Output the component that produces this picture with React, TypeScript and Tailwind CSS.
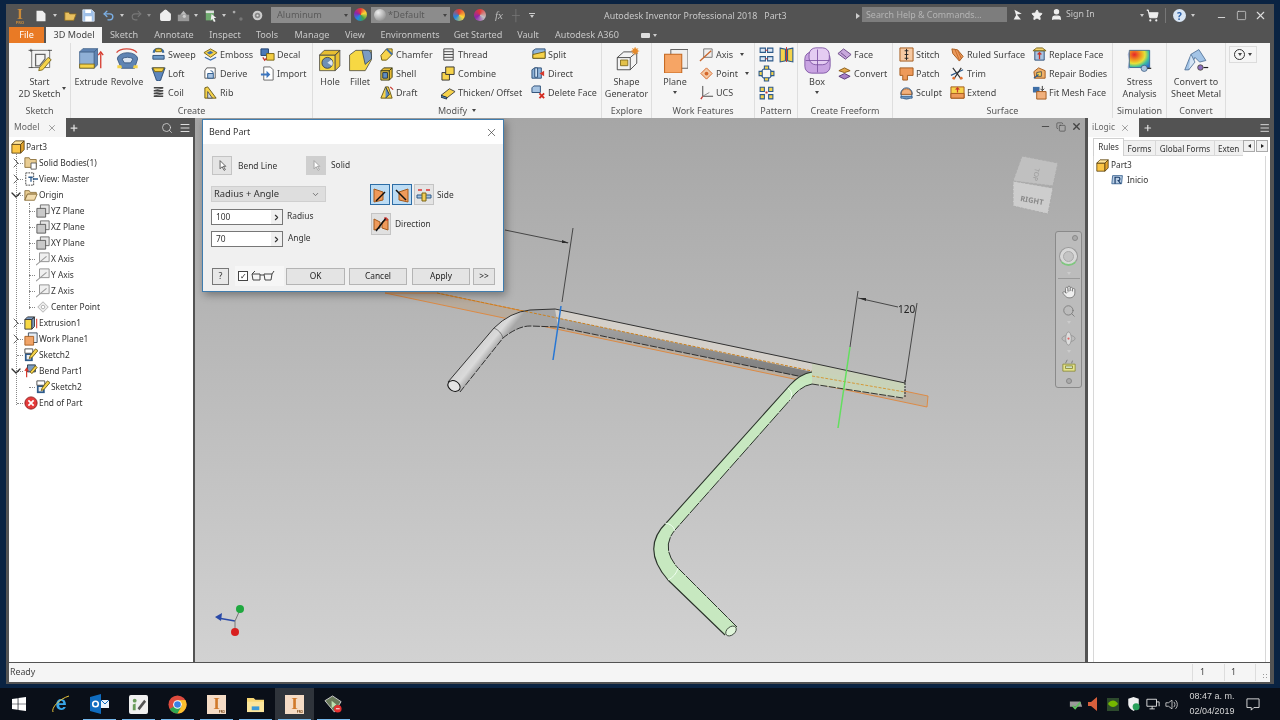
import React from "react";
import { House, Undo2, Redo2, Star, User, ShoppingCart, Minus, Square, X, Search, Menu, Plus, ChevronRight, ChevronDown, Copy } from "lucide-react";

type P = { children?: React.ReactNode; s?: number; v?: number };
const S = ({ children, s = 15, v = 16 }: P) => (
  <svg width={s} height={s} viewBox={`0 0 ${v} ${v}`} className="block shrink-0">{children}</svg>
);

const Cube = ({ s = 15, f = "#fbc544", t = "#ffe59a", r = "#e5a52c", l = "#5a4212" }: { s?: number; f?: string; t?: string; r?: string; l?: string }) => (
  <S s={s}>
    <path d="M1 5h10v10H1z" fill={f} stroke={l} />
    <path d="M1 5l4-4h10l-4 4z" fill={t} stroke={l} />
    <path d="M11 5l4-4v10l-4 4z" fill={r} stroke={l} />
  </S>
);

const Dn = () => <span className="inline-block w-0 h-0 border-x-[2.5px] border-x-transparent border-t-[3px] border-t-[#444]" />;
const DnW = () => <span className="inline-block w-0 h-0 border-x-[2.5px] border-x-transparent border-t-[3px] border-t-[#ccc]" />;

/* ---------- small ribbon icons ---------- */
const ic: Record<string, React.ReactNode> = {
  sweep: <S><path d="M3 6a5 4 0 0 1 10 0" fill="none" stroke="#3b6ea5" strokeWidth="2.5" /><path d="M2 9h12v4H2z" fill="#6f9bc9" stroke="#2d4f78" /><path d="M5 2h6v3H5z" fill="#f6d34a" stroke="#7a6414" /></S>,
  loft: <S><path d="M1 2h14L11 13a3 3 0 0 1-6 0z" fill="#5d86bd" stroke="#2d4f78" /><path d="M2 2h12l-2 4H4z" fill="#f5d347" stroke="#7a6414" /></S>,
  coil: <S><g fill="none" stroke="#444" strokeWidth="1.6"><path d="M3 3h10M3 6h10M3 9h10M3 12h10" /><path d="M13 3L3 6M13 6L3 9M13 9L3 12" strokeWidth=".8" /></g></S>,
  emboss: <S><path d="M1 6l7-4 7 4-7 5z" fill="#f6d34a" stroke="#7a6414" /><path d="M4 6l4-2 3 2-4 2z" fill="#3f6fb0" /><path d="M2 11l6 3 6-3" fill="none" stroke="#3f6fb0" strokeWidth="1.3" /></S>,
  derive: <S><path d="M4 2h9v11H2V5z" fill="#fff" stroke="#555" /><path d="M5 8h6v5H5z" fill="#a9c4e2" stroke="#2d5a8a" /><path d="M8 5a3 3 0 0 1 3 3" fill="none" stroke="#2d5a8a" /></S>,
  rib: <S><path d="M2 14V3l3-1 9 12z" fill="#f6d34a" stroke="#6a5a14" /><path d="M5 14V7l5 7z" fill="#cfd9e6" stroke="#555" /></S>,
  decal: <S><path d="M1 2h8v7H1z" fill="#4b79b8" stroke="#1f3f6c" /><path d="M7 7h8v7H7z" fill="#f4cd42" stroke="#7a6414" /><path d="M3 11l2 3 2-2" fill="none" stroke="#c8362d" strokeWidth="1.4" /></S>,
  imp: <S><path d="M4 1h7l3 3v11H4z" fill="#fff" stroke="#666" /><path d="M1 8h6V5l4 4-4 4v-3H1z" fill="#3d77c0" /></S>,
  chamfer: <S><path d="M2 9l6-7h6v6l-6 6H3z" fill="#f7d34b" stroke="#6a5a14" /><path d="M8 2l6 6" stroke="#3e6ea6" strokeWidth="2" /></S>,
  shell: <S><path d="M2 5h9v10H2z" fill="#f7d34b" stroke="#3c3c14" /><path d="M2 5l3-3h9l-3 3zM11 5l3-3v10l-3 3z" fill="#e7bb36" stroke="#3c3c14" /><path d="M4 7h5v6H4z" fill="#5f8ec2" stroke="#234" /></S>,
  draft: <S><path d="M2 14L7 2h3l4 12z" fill="#f7d34b" stroke="#6a5a14" /><path d="M7 2l4 8-4 4" fill="#5f8ec2" stroke="#234" /><path d="M12 2l3 3" stroke="#c8362d" strokeWidth="1.3" /></S>,
  thread: <S><path d="M3 2h10v12H3z" fill="#f3f3f3" stroke="#444" /><path d="M3 5h10M3 8h10M3 11h10" stroke="#444" /></S>,
  combine: <S><path d="M1 7h8v8H1z" fill="#f7d34b" stroke="#333" /><path d="M5 1h9v8H5z" fill="#f7d34b" stroke="#333" /></S>,
  thicken: <S><path d="M0 11l9-7 6 3-9 7z" fill="#f7d34b" stroke="#444" /><path d="M0 11v2l6 2v-2z" fill="#5f8ec2" stroke="#234" /></S>,
  split: <S><path d="M2 4l3-2h10v10H2z" fill="#8fb4da" stroke="#2d4f78" /><path d="M2 8l13-3v7H2z" fill="#f7d34b" stroke="#7a6414" /></S>,
  direct: <S><path d="M1 4l3-2h7v11H1z" fill="#8fb4da" stroke="#2d4f78" /><path d="M4 2h3v10H4z" fill="#cfe0f1" stroke="#2d4f78" /><path d="M9 8l5-3v6z" fill="#d73a2d" /></S>,
  delface: <S><path d="M1 3l2-2h7v7H1z" fill="#a7c4e2" stroke="#2d4f78" /><path d="M9 9l5 5M14 9l-5 5" stroke="#d42a1f" strokeWidth="2" /></S>,
  axis: <S><path d="M5 2h9v9H5z" fill="#eee" stroke="#777" /><path d="M1 15L13 4" stroke="#c8662d" strokeWidth="1.4" /></S>,
  point: <S><path d="M8 2l6 6-6 6-6-6z" fill="#f4c9a4" stroke="#d4662a" /><circle cx="8" cy="8" r="2" fill="#d4662a" /></S>,
  ucs: <S><path d="M4 1v11h11" fill="none" stroke="#444" /><path d="M4 12l-2 3" stroke="#c8362d" strokeWidth="1.4" /><path d="M4 12l7-4" stroke="#888" /></S>,
  face: <S><path d="M1 7l6-5 8 6-6 5z" fill="#c8a8dc" stroke="#6b4a88" /><path d="M4 6l6 5" stroke="#6b4a88" /></S>,
  convert: <S><path d="M2 5l6-3 6 3-6 2z" fill="#e3a94a" stroke="#8a5a14" /><path d="M2 11l6-3 6 3-6 3z" fill="#a880c8" stroke="#5a3a78" /></S>,
  stitch: <S><path d="M1 1h14v14H1z" fill="#f6c9a2" stroke="#a35a1c" /><path d="M8 2v12M6 4h4M6 8h4M6 12h4" stroke="#222" /></S>,
  patch: <S><path d="M1 2h14v8H9v5H4v-5H1z" fill="#ee9a5a" stroke="#a35a1c" /></S>,
  sculpt: <S><path d="M2 10a6 6 0 0 1 12 0z" fill="#f1b07c" stroke="#a35a1c" /><circle cx="8" cy="9" r="6" fill="none" stroke="#2d5a8a" /><path d="M2 12h12v2H2z" fill="#8fb4da" stroke="#2d5a8a" /></S>,
  ruled: <S><path d="M2 2l6 1 6 7-4 5-7-8z" fill="#ea9a5c" stroke="#a35a1c" /><path d="M5 2l5 12M8 3l4 9" stroke="#c76a2a" /></S>,
  trim: <S><path d="M1 10l13-6" stroke="#2d5a8a" strokeWidth="1.4" /><path d="M3 2l9 12M12 2L4 14" stroke="#333" strokeWidth="1.2" /><circle cx="4" cy="13" r="1.5" fill="#e07030" /><circle cx="12" cy="13" r="1.5" fill="#e07030" /></S>,
  extend: <S><path d="M1 2h14v12H1z" fill="#f7d34b" stroke="#a35a1c" /><path d="M1 9h14v5H1z" fill="#ee9a5a" stroke="#a35a1c" /><path d="M8 8V3M6 5l2-2 2 2" stroke="#c8362d" strokeWidth="1.3" fill="none" /></S>,
  replace: <S><path d="M3 4h10v10H3z" fill="#a7c4e2" stroke="#2d4f78" /><path d="M1 4l4-3h6l4 3z" fill="#f3d26c" stroke="#7a6414" /><path d="M8 13V6M6 8l2-2 2 2" stroke="#c8362d" strokeWidth="1.4" fill="none" /></S>,
  repair: <S><path d="M2 6l5-4 7 3v8H3z" fill="#f0b06a" stroke="#a35a1c" /><path d="M5 7l5-1v5H5z" fill="#f7d34b" stroke="#555" /><path d="M2 13l5-4" stroke="#2d5a8a" strokeWidth="1.3" /></S>,
  fitmesh: <S><path d="M1 2h7v6H1z" fill="#3e6ea6" /><path d="M5 7h10v8H5z" fill="#f1b07c" stroke="#a35a1c" /><path d="M11 1v5M9 4l2 2 2-2" stroke="#333" fill="none" /></S>,
  pat1: <S s={17}><path d="M2 2h5v4H2zM9 2h5v4H9zM2 10h5v4H2zM9 10h5v4H9z" fill="#dbe7f5" stroke="#2d5a8a" /><path d="M7 4h2M7 12h2" stroke="#c8362d" /></S>,
  pat2: <S s={17}><path d="M2 2l5 1v11l-5 1zM14 2l-5 1v11l5 1z" fill="#f4d34b" stroke="#2d5a8a" /><path d="M8 1v14" stroke="#c8362d" /></S>,
  pat3: <S s={17}><circle cx="8" cy="8" r="5" fill="none" stroke="#2d5a8a" /><path d="M6 1h4v3H6zM6 12h4v3H6zM1 6h3v4H1zM12 6h3v4h-3z" fill="#f4d34b" stroke="#2d5a8a" /></S>,
  pat4: <S s={17}><path d="M2 3h4v4H2zM10 3h4v4h-4zM2 10h4v4H2zM10 10h4v4h-4z" fill="#f4d34b" stroke="#2d5a8a" /><path d="M7 8h2M8 7v2" stroke="#c8362d" strokeWidth="1.5" /></S>,
};

/* ---------- large ribbon icons ---------- */
const L: Record<string, React.ReactNode> = {
  sketch: <S s={25} v={32}><path d="M6 3h23v22H6z" fill="#f4f4f4" stroke="#555" /><path d="M11 8h12v6l-7 9h-5z" fill="none" stroke="#666" strokeWidth="1.6" /><path d="M16 25L27 12l4 3-11 13-5 1z" fill="#f6d34a" stroke="#6a5a14" /><path d="M2 3h5M5 1v4M27 3h5M2 25h5" stroke="#333" /></S>,
  extrude: <S s={26} v={32}><path d="M2 6h18v20H2z" fill="#8fb0d6" stroke="#45668e" /><path d="M2 6l4-4h18l-4 4zM20 6l4-4v20l-4 4z" fill="#5f84b3" stroke="#45668e" /><path d="M2 21h18v5H2z" fill="#f4d34b" stroke="#7a6414" /><path d="M28 26V8M25 10l3-4 3 4" stroke="#d6392d" strokeWidth="1.6" fill="none" /></S>,
  revolve: <S s={25} v={32}><path d="M2 6a14 8 0 0 1 26 0" fill="none" stroke="#d6493d" strokeWidth="1.6" /><path d="M3 14a13 8 0 0 1 26 0l-4 12H8z" fill="#5f84b3" stroke="#2f4f78" /><path d="M9 14a8 4 0 0 1 14 0l-3 5H12z" fill="#dbe5f1" stroke="#2f4f78" /><path d="M3 22h5l1 4H3zM29 22h-5l-1 4h6z" fill="#f4d34b" /></S>,
  hole: <S s={25} v={32}><path d="M2 9h20v20H2z" fill="#f7d843" stroke="#444" /><path d="M2 9l6-6h20l-6 6zM22 9l6-6v20l-6 6z" fill="#e8bf31" stroke="#444" /><circle cx="12" cy="19" r="7" fill="#6f8fb5" stroke="#333" /><path d="M12 19l5-4a7 7 0 0 1 1 8z" fill="#dbe5f1" /></S>,
  fillet: <S s={25} v={32}><path d="M2 29V9L10 3h20v12l-8 14z" fill="#f7d843" stroke="#444" /><path d="M18 3h8a6 6 0 0 1 4 6v5l-8 7z" fill="#7b9bc2" stroke="#345" /></S>,
  shape: <S s={26} v={32}><path d="M4 13l8-7h16v14l-8 8H4z" fill="#f3f3f3" stroke="#333" /><path d="M4 13h16v15M20 13l8-7" fill="none" stroke="#333" /><path d="M8 16h9v7H8z" fill="#e3c14a" stroke="#7a6414" /><circle cx="26" cy="5" r="3.4" fill="#e58a2a" /><path d="M26 0v10M21 5h10M22.5 1.5l7 7M29.500 1.500l-7 7" stroke="#e58a2a" /></S>,
  plane: <S s={25} v={32}><path d="M10 2h22v24H10z" fill="#eee" stroke="#666" strokeWidth="1.3" /><path d="M2 8h22v24H2z" fill="#f6a565" stroke="#c4661d" strokeWidth="1.3" /></S>,
  box: <S s={27} v={32}><rect x="1" y="6" width="30" height="25" rx="8" fill="#c9a4e2" stroke="#7a4fa0" /><rect x="6" y="1" width="24" height="20" rx="8" fill="#e4ccf2" stroke="#7a4fa0" /><path d="M16 3v27M2 16h28" stroke="#7a4fa0" /></S>,
  stress: <S s={25} v={32}><defs><radialGradient id="st" cx=".25" cy=".25" r=".95"><stop offset="0" stopColor="#e8252a" /><stop offset=".35" stopColor="#f0a020" /><stop offset=".55" stopColor="#e4e23a" /><stop offset=".75" stopColor="#40c0a0" /><stop offset="1" stopColor="#2c6ed4" /></radialGradient></defs><path d="M3 3h26v22H3z" fill="url(#st)" stroke="#2a5a8a" /><path d="M1 8L3 3l-2 22 2 3" fill="#9ac" /><circle cx="22" cy="26" r="4" fill="#aac4df" stroke="#3a5a80" /><path d="M26 26h5" stroke="#222" strokeWidth="1.5" /></S>,
  sheet: <S s={25} v={32}><path d="M1 28L9 8l10-6 9 14-8 2-6-6-8 16z" fill="#a3c4e6" stroke="#44668e" /><path d="M9 8l5 10-8 10" fill="#d4e4f4" stroke="#44668e" /><circle cx="21" cy="25" r="3.500" fill="#8b6fc0" stroke="#443" /><path d="M25 25h6" stroke="#222" strokeWidth="1.5" /></S>,
};

const Small = ({ i, t, dn }: { i: string; t: string; dn?: boolean }) => (
  <div className="h-[19px] flex items-center gap-[2px] whitespace-nowrap">
    <span className="w-[15px] flex justify-center">{ic[i]}</span>
    <span>{t}</span>
    {dn && <span className="ml-[5px] flex"><Dn /></span>}
  </div>
);
const Col = ({ items, className }: { items: [string, string, boolean?][]; className: string }) => (
  <div className={`flex flex-col shrink-0 ${className}`}>
    {items.map((x) => <Small key={x[1]} i={x[0]} t={x[1]} dn={x[2]} />)}
  </div>
);
const Big = ({ i, l, className, dn, corner }: { i: string; l: string[]; className: string; dn?: boolean; corner?: boolean }) => (
  <div className={`relative flex flex-col items-center shrink-0 ${className}`}>
    <div className="h-[30px] flex items-center">{L[i]}</div>
    <div className="mt-px text-center leading-[12px] whitespace-nowrap">{l.map((x) => <div key={x}>{x}</div>)}</div>
    {dn && <div className="mt-[3px] flex"><Dn /></div>}
    {corner && <span className="absolute left-[53px] top-[42px] flex"><Dn /></span>}
  </div>
);
const Group = ({ label, className, children, dn }: { label: string; className: string; children: React.ReactNode; dn?: boolean }) => (
  <div className={`h-full flex flex-col border-r border-[#dedede] shrink-0 ${className}`}>
    <div className="flex pt-[2px] h-[60px]">{children}</div>
    <div className="h-[15px] flex items-center justify-center gap-[5px] text-[#555]">{label}{dn && <Dn />}</div>
  </div>
);

const tabs: [string, string][] = [
  ["Sketch", "w-[44px]"], ["Annotate", "w-[56px]"], ["Inspect", "w-[46px]"], ["Tools", "w-[38px]"], ["Manage", "w-[52px]"],
  ["View", "w-[34px]"], ["Environments", "w-[76px]"], ["Get Started", "w-[60px]"], ["Vault", "w-[40px]"], ["Autodesk A360", "w-[78px]"],
];

/* ---------- tree ---------- */
const T: Record<string, React.ReactNode> = {
  part: <Cube s={14} />,
  folder: <S s={14}><path d="M1 3h5l1 2h8v9H1z" fill="#e9cd93" stroke="#8a6f3a" /></S>,
  solids: <S s={14}><path d="M1 2h5l1 2h7v9H1z" fill="#e9cd93" stroke="#8a6f3a" /><path d="M8 8h6v7H8z" fill="#fff" stroke="#555" /></S>,
  view: <S s={14}><path d="M2 1h9v14H2z" fill="#fff" stroke="#333" strokeDasharray="2 1" /><path d="M5 6h5M8 6v5M10 8h6" stroke="#2d5a8a" strokeWidth="1.5" /></S>,
  open: <S s={14}><path d="M1 3h5l1 2h7v2H4l-3 7z" fill="#e9cd93" stroke="#8a6f3a" /><path d="M1 14l3-7h11l-3 7z" fill="#f2dcae" stroke="#8a6f3a" /></S>,
  plane: <S s={14}><path d="M5 1h10v10H5z" fill="#e6e6e6" stroke="#666" /><path d="M1 5h10v10H1z" fill="#c9c9c9" stroke="#555" /></S>,
  axis: <S s={14}><path d="M4 1h11v10H4z" fill="#f0f0f0" stroke="#888" /><path d="M0 15L12 5" stroke="#999" strokeWidth="1.2" /></S>,
  point: <S s={14}><path d="M8 2l6 6-6 6-6-6z" fill="#eee" stroke="#aaa" /><circle cx="8" cy="8" r="2" fill="#fff" stroke="#aaa" /></S>,
  extr: <S s={14}><path d="M1 4h8v11H1z" fill="#f7d843" stroke="#333" /><path d="M1 4l3-3h8l-3 3zM9 4l3-3v11l-3 3z" fill="#7b9bc2" stroke="#333" /><path d="M14.500 14V3" stroke="#d6392d" strokeWidth="1.2" /></S>,
  wp: <S s={14}><path d="M5 1h10v11H5z" fill="#e4ecf5" stroke="#345" /><path d="M1 5h10v10H1z" fill="#f0a468" stroke="#a35a1c" /></S>,
  sketch: <S s={14}><path d="M1 6h9v9H1z" fill="#2d5a8a" /><path d="M3 8h5v5H3z" fill="#eee" /><path d="M1 1h9v5H1z" fill="#fff" stroke="#444" /><path d="M7 9l6-8 3 2-7 8-3 1z" fill="#f6d34a" stroke="#6a5a14" /></S>,
  bend: <S s={14}><path d="M4 1h9v8H4z" fill="#7b9bc2" stroke="#234" /><path d="M7 9l6-7 2 2-6 7z" fill="#f6d34a" stroke="#6a5a14" /><path d="M3 15V6M1 8l2-3 2 3" stroke="#d6392d" strokeWidth="1.4" fill="none" /></S>,
  end: <S s={14}><circle cx="8" cy="8" r="7" fill="#e43a3a" stroke="#8a1a1a" /><path d="M5 5l6 6M11 5l-6 6" stroke="#fff" strokeWidth="2" /></S>,
};
type Row = { l: number; i: string; t: string; c?: "r" | "d" };
const rows: Row[] = [
  { l: 0, i: "part", t: "Part3" },
  { l: 1, i: "solids", t: "Solid Bodies(1)", c: "r" },
  { l: 1, i: "view", t: "View: Master", c: "r" },
  { l: 1, i: "open", t: "Origin", c: "d" },
  { l: 2, i: "plane", t: "YZ Plane" },
  { l: 2, i: "plane", t: "XZ Plane" },
  { l: 2, i: "plane", t: "XY Plane" },
  { l: 2, i: "axis", t: "X Axis" },
  { l: 2, i: "axis", t: "Y Axis" },
  { l: 2, i: "axis", t: "Z Axis" },
  { l: 2, i: "point", t: "Center Point" },
  { l: 1, i: "extr", t: "Extrusion1", c: "r" },
  { l: 1, i: "wp", t: "Work Plane1", c: "r" },
  { l: 1, i: "sketch", t: "Sketch2" },
  { l: 1, i: "bend", t: "Bend Part1", c: "d" },
  { l: 2, i: "sketch", t: "Sketch2" },
  { l: 1, i: "end", t: "End of Part" },
];

const TreeRow = ({ r, idx }: { r: Row; idx: number }) => (
  <div className={`relative h-4 flex items-center gap-px whitespace-nowrap ${r.l === 0 ? "ml-[2px]" : r.l === 1 ? "ml-[15px]" : "ml-[27px]"}`}>
    {idx > 0 && <span className="absolute left-[-7px] top-[8px] w-[6px] border-t border-dotted border-[#888]" />}
    {r.c && (
      <span className="absolute left-[-16px] top-0 text-[#666]">
        {r.c === "r" ? <ChevronRight size={16} strokeWidth={1.5} /> : <ChevronDown size={16} strokeWidth={2} className="text-[#333]" />}
      </span>
    )}
    {T[r.i]}
    <span className="text-[#333]">{r.t}</span>
  </div>
);

/* ---------- dialog ---------- */
const Btn = ({ t, className }: { t: string; className: string }) => (
  <div className={`h-[17px] bg-[#e4e4e4] border border-[#b4b4b4] flex items-center justify-center text-[#222] shrink-0 ${className}`}>{t}</div>
);
const Arrow = ({ c = "#444" }: { c?: string }) => (
  <S s={13}><path d="M5 2v10l2.500-2.500L10 14l1.500-1-2.500-4H12z" fill="#fff" stroke={c} /></S>
);
const sideIcon = (k: number) => (
  <S s={16}>
    {k === 0 && <><path d="M2 2l9 3v8l-9 2z" fill="#ef9a5a" stroke="#a35a1c" /><path d="M4 14l9-9" stroke="#111" strokeWidth="1.500" /></>}
    {k === 1 && <><path d="M14 2L5 5v8l9 2z" fill="#ef9a5a" stroke="#a35a1c" /><path d="M2 3l10 10" stroke="#111" strokeWidth="1.500" /></>}
    {k === 2 && <><path d="M2 3h4M10 3h4" stroke="#d33" strokeWidth="1.300" /><path d="M1 8h14v3H1z" fill="#a7c4e2" stroke="#2d5a8a" /><path d="M6 6h4v8H6z" fill="#f2ce5a" stroke="#7a6414" /></>}
    {k === 3 && <><path d="M1 3l6 3v6l-6 2zM15 3L9 6v6l6 2z" fill="#ef9a5a" stroke="#a35a1c" /><path d="M3 15L13 2" stroke="#111" strokeWidth="1.500" /><path d="M11 2h3v3" stroke="#d22" fill="none" /></>}
  </S>
);

const Dialog = () => (
  <div className="absolute left-[7px] top-px w-[302px] h-[173px] border border-[#3f7cae] bg-[#f0f0f0] shadow-[2px_3px_8px_rgba(0,0,0,0.35)] flex flex-col text-[8.400px] text-[#333]">
    <div className="h-[24px] bg-white flex items-center justify-between pl-[6px] pr-[5px] text-[8.900px] shrink-0">
      <span>Bend Part</span>
      <X size={13} strokeWidth={1.2} className="text-[#333]" />
    </div>
    <div className="pl-[9px] pt-[12px] flex items-center">
      <div className="w-[20px] h-[19px] bg-[#e4e4e4] border border-[#c4c4c4] flex items-center justify-center"><Arrow /></div>
      <span className="ml-[6px] w-[68px] mt-[2px]">Bend Line</span>
      <div className="w-[20px] h-[19px] bg-[#cfcfcf] flex items-center justify-center"><Arrow c="#999" /></div>
      <span className="ml-[5px]">Solid</span>
    </div>
    <div className="flex mt-[9px]">
      <div className="pl-[8px] w-[167px] pt-[2px] shrink-0">
        <div className="w-[115px] h-[16px] bg-[#dedede] border border-[#cfcfcf] flex items-center justify-between pl-[2px] pr-[5px] text-[9.400px]">
          <span className="text-[#333]">Radius + Angle</span><ChevronDown size={9} className="text-[#555]" />
        </div>
        <div className="flex items-center mt-[7px]">
          <div className="w-[72px] h-[16px] border border-[#777] bg-white flex items-center justify-between pl-[4px]"><span>100</span><span className="h-full w-[11px] bg-[#f0f0f0] flex items-center justify-center"><ChevronRight size={9} strokeWidth={3} /></span></div>
          <span className="ml-[4px] -mt-[1px]">Radius</span>
        </div>
        <div className="flex items-center mt-[6px]">
          <div className="w-[72px] h-[16px] border border-[#777] bg-white flex items-center justify-between pl-[4px]"><span>70</span><span className="h-full w-[11px] bg-[#f0f0f0] flex items-center justify-center"><ChevronRight size={9} strokeWidth={3} /></span></div>
          <span className="ml-[5px] -mt-[2px]">Angle</span>
        </div>
      </div>
      <div>
        <div className="flex items-center gap-[2px]">
          <div className="w-[20px] h-[21px] bg-[#bcdcf4] border border-[#2d6da6] flex items-center justify-center">{sideIcon(0)}</div>
          <div className="w-[20px] h-[21px] bg-[#bcdcf4] border border-[#2d6da6] flex items-center justify-center">{sideIcon(1)}</div>
          <div className="w-[20px] h-[21px] bg-[#e4e4e4] border border-[#c4c4c4] flex items-center justify-center">{sideIcon(2)}</div>
          <span className="ml-px mt-px">Side</span>
        </div>
        <div className="flex items-center mt-[8px] ml-px">
          <div className="w-[20px] h-[22px] bg-[#e0e0e0] border border-[#c4c4c4] flex items-center justify-center">{sideIcon(3)}</div>
          <span className="ml-[4px]">Direction</span>
        </div>
      </div>
    </div>
    <div className="flex items-center mt-[19px] pl-[9px]">
      <div className="w-[17px] h-[17px] bg-[#e8e8e8] border border-[#777] flex items-center justify-center text-[9px] text-[#333]">?</div>
      <div className="ml-[6px] w-[49px] h-[20px] bg-[#f6f6f6] flex items-center pl-[3px] gap-[3px]">
        <span className="w-[10px] h-[10px] bg-white border border-[#444] flex items-center justify-center text-[8px] leading-none text-[#222]">✓</span>
        <svg width="24" height="12" viewBox="0 0 24 12" className="block"><path d="M1 4h8v6H2zM13 4h8l-1 6h-6zM9 5h4M21 4l2-3M1 4l3-3" fill="none" stroke="#444" /></svg>
      </div>
      <Btn t="OK" className="ml-[2px] w-[59px]" />
      <Btn t="Cancel" className="ml-[4px] w-[58px]" />
      <Btn t="Apply" className="ml-[5px] w-[58px]" />
      <Btn t=">>" className="ml-[3px] w-[22px]" />
    </div>
  </div>
);

/* ---------- 3D scene (a drawing) ---------- */
const Scene = () => (
  <svg className="absolute inset-0" width="890" height="544" viewBox="195 118 890 544">
    <defs>
      <linearGradient id="band" x1="0" y1="0" x2="0" y2="1"><stop offset="0" stopColor="#a8a8a8" /><stop offset="1" stopColor="#6e6e6e" /></linearGradient>
      <linearGradient id="tube" gradientUnits="userSpaceOnUse" x1="470" y1="350" x2="485" y2="362"><stop offset="0" stopColor="#cfcfcf" /><stop offset=".6" stopColor="#dadada" /><stop offset="1" stopColor="#a6a6a6" /></linearGradient>
    </defs>
    <path d="M385 293L437 293 928 396 927 407z" fill="#b9996f" fillOpacity=".35" stroke="#e0863a" strokeWidth=".9" />
    <path d="M448 382L494 328Q510 312 530 310L555 309 905 383 903 398 558 327 530 326Q518 326 503 338L460 392z" fill="url(#tube)" />
    <path d="M555 309L905 383 903 398 558 327z" fill="#d4d0ca" />
    <path d="M558 318L860 382 880 393 558 327z" fill="url(#band)" />
    <path d="M437 293L812 371" stroke="#c9801f" strokeWidth="1" strokeDasharray="3 1.500" fill="none" />
    <path d="M448 382L494 328Q510 312 530 310L555 309 812 363" fill="none" stroke="#222" strokeWidth=".9" />
    <path d="M460 392L503 338Q518 326 530 326L558 327 808 378" fill="none" stroke="#222" strokeWidth=".9" strokeDasharray="7 1.500" />
    <path d="M494 328Q501 331 503 338" fill="none" stroke="#555" strokeWidth=".7" />
    <ellipse cx="454" cy="386" rx="6.500" ry="5" transform="rotate(30 454 386)" fill="#e4e4e4" stroke="#111" strokeWidth="1" />
    {/* green part */}
    <path d="M812 372Q800 374 790 385L667 522Q640 548 668 580L725 635 737 627 678 568Q660 548 675 530L790 400Q800 386 812 384L903 398 905 383z" fill="#c7e9c0" fillOpacity=".96" />
    <path d="M812 363L905 383 903 398 812 384z" fill="#c8d0b8" fillOpacity=".9" />
    <path d="M812 376L905 392" stroke="#d49a3a" strokeWidth="1" strokeDasharray="3 1.500" />
    <path d="M812 363L905 383" fill="none" stroke="#222" strokeWidth=".9" />
    <path d="M812 384L903 398" fill="none" stroke="#222" strokeWidth=".9" strokeDasharray="7 1.500" />
    <path d="M812 372Q800 374 790 385L667 522Q640 548 668 580L725 635" fill="none" stroke="#2a332a" strokeWidth="1.100" />
    <path d="M812 384Q800 386 790 400L675 530Q660 548 678 568L737 627" fill="none" stroke="#2a332a" strokeWidth="1" strokeDasharray="14 1" />
    <path d="M788 388Q794 392 790 400M665 523Q673 524 675 531M668 580Q676 576 678 568" fill="none" stroke="#f0fff0" strokeWidth="1" />
    <ellipse cx="731" cy="631" rx="6" ry="4" transform="rotate(-40 731 631)" fill="#dff5da" stroke="#2a332a" strokeWidth=".8" />
    <path d="M905 380V398" stroke="#222" strokeDasharray="2 1" />
    {/* dimensions */}
    <path d="M505 230L568 243M573 228L562 302M858 291L850 347M858 298L898 307M917 303L905 383" stroke="#2b2b2b" strokeWidth=".8" fill="none" />
    <path d="M569 243l-7-3v3zM859 298l7 3v-3z" fill="#2b2b2b" />
    <path d="M561 306L553 360" stroke="#2676d4" strokeWidth="1.500" />
    <path d="M850 347L838 428" stroke="#62e05e" strokeWidth="1.500" />
    <text x="898" y="313" fontSize="10" fill="#222" fontFamily="'Noto Sans',sans-serif">120</text>
    {/* triad */}
    <path d="M235 621L218 618" stroke="#2a4aa8" strokeWidth="1.500" />
    <path d="M215 617l7-4-1 8z" fill="#2a4aa8" />
    <path d="M235 621L239 612M235 621V630" stroke="#777" />
    <circle cx="240" cy="609" r="4" fill="#1fa83f" />
    <circle cx="235" cy="632" r="4" fill="#d81f1f" />
    {/* view cube */}
    <path d="M1022 156L1058 163 1053 186 1013 181z" fill="#c0c0c0" stroke="#aaa" strokeDasharray="3 1" />
    <path d="M1013 181L1053 188 1048 214 1013 206z" fill="#cdcdcd" stroke="#aaa" strokeDasharray="3 1" />
    <text x="0" y="0" transform="translate(1020 201) rotate(10)" fontSize="7.500" fontWeight="700" fill="#8a8a8a" fontFamily="'Noto Sans',sans-serif">RIGHT</text>
    <text x="0" y="0" transform="translate(1035 168) rotate(100)" fontSize="6.500" fill="#999" fontFamily="'Noto Sans',sans-serif">TOP</text>
  </svg>
);

const NavBar = () => (
  <div className="absolute left-[860px] top-[113px] w-[27px] h-[157px] rounded-[3px] border border-[#8a8a8a] bg-[#bcbcbc] flex flex-col items-center pt-[3px]">
    <span className="self-end mr-[3px] w-[6px] h-[6px] rounded-full bg-[#aaa] border border-[#888]" />
    <span className="mt-[6px] w-[19px] h-[19px] rounded-full bg-[#d8d8d8] border border-[#999] border-b-2 border-b-[#7fc77f] flex items-center justify-center"><span className="w-[11px] h-[11px] rounded-full bg-[#c4c4c4] border border-[#aaa]" /></span>
    <span className="mt-[6px] flex"><DnW /></span>
    <span className="mt-[3px] w-[22px] border-t border-[#999]" />
    <svg width="14" height="14" viewBox="0 0 24 24" className="mt-[6px] block" fill="#eee" stroke="#777" strokeWidth="1.500"><path d="M18 11V6a2 2 0 0 0-4 0M14 10V4a2 2 0 0 0-4 0v2M10 10.500V6a2 2 0 0 0-4 0v8M18 8a2 2 0 1 1 4 0v6a8 8 0 0 1-8 8h-2c-3 0-4-1-6-3l-4-4a2 2 0 0 1 3-3l3 2" /></svg>
    <span className="mt-[5px]"><Search size={14} strokeWidth={1.400} className="text-[#777]" /></span>
    <span className="mt-[3px] flex"><DnW /></span>
    <svg width="15" height="15" viewBox="0 0 16 16" className="mt-[7px] block"><ellipse cx="8" cy="8" rx="7" ry="3.500" fill="none" stroke="#999" /><ellipse cx="8" cy="8" rx="3" ry="7" fill="#ddd" stroke="#999" /><circle cx="8" cy="8" r="1.200" fill="#d66" /></svg>
    <span className="mt-[4px] flex"><DnW /></span>
    <svg width="14" height="14" viewBox="0 0 16 16" className="mt-[5px] block"><path d="M1 7h14v8H1z" fill="#e6e48a" stroke="#8a8a3a" /><path d="M4 9h8v3H4z" fill="#cfe0c8" stroke="#8a8a3a" /><path d="M4 6l2-4M11 6l1-3" stroke="#777" /></svg>
    <span className="mt-[6px] w-[6px] h-[6px] rounded-full bg-[#aaa] border border-[#888]" />
  </div>
);

/* ---------- taskbar icons ---------- */
const Task = ({ children, active, line = true }: { children: React.ReactNode; active?: boolean; line?: boolean }) => (
  <div className={`relative w-[39px] h-[32px] flex items-center justify-center shrink-0 ${active ? "bg-[#2f343b]" : ""}`}>
    {children}
    {line && <span className="absolute bottom-0 left-[3px] right-[3px] h-[1px] bg-[#76b9ed]" />}
  </div>
);
const Ilogo = () => (
  <div className="w-[19px] h-[19px] bg-[#f5dcc6] flex items-start justify-center relative overflow-hidden">
    <span className="text-[#d07a2c] text-[17px] leading-[18px] font-bold font-['Liberation_Serif',serif]">I</span>
    <span className="absolute right-[1px] bottom-0 text-[3px] leading-[4px] text-[#7a4a1a] font-bold">PRO</span>
  </div>
);

export default function App() {
  return (
    <div className="w-[1280px] h-[720px] overflow-hidden bg-[#0a2342] flex flex-col font-['Noto_Sans',sans-serif] text-[9px] text-[#444] blur-[0.5px]">
      {/* window */}
      <div className="mx-[6px] mt-[4px] h-[680px] shrink-0 bg-[#535353] flex flex-col pl-[3px] pr-[4px] pb-[2px]">
        {/* title row */}
        <div className="h-[23px] flex items-center relative shrink-0 text-[#d4d4d4]">
          <div className="ml-[5px] w-[12px] h-[18px] flex flex-col items-center text-[#c98a3a]">
            <span className="text-[15px] leading-[14px] font-bold font-['Liberation_Serif',serif]">I</span>
            <span className="text-[4px] leading-[4px] font-bold">PRO</span>
          </div>
          <div className="flex items-center">
            <span className="ml-[9px]"><S s={12}><path d="M2 1h8l4 4v10H2z" fill="#eee" /></S></span>
            <span className="ml-[6px] flex"><DnW /></span>
            <span className="ml-[7px]"><S s={13}><path d="M1 4h5l1 2h8l-3 8H1z" fill="#e8c060" stroke="#8a6a20" /></S></span>
            <span className="ml-[5px]"><S s={13}><path d="M1 1h11l3 3v11H1z" fill="#9fc0e8" stroke="#dbe8f5" /><path d="M4 1h7v4H4zM4 9h8v6H4z" fill="#fff" /></S></span>
            <Undo2 size={13} className="ml-[7px] text-[#7cb0e6]" strokeWidth={2.500} />
            <span className="ml-[5px] flex"><DnW /></span>
            <Redo2 size={13} className="ml-[6px] text-[#777]" />
            <span className="ml-[4px] flex opacity-50"><DnW /></span>
            <House size={13} fill="#eee" className="ml-[8px] text-[#eee]" />
            <span className="ml-[5px]"><S s={13}><path d="M1 7h14v8H1z" fill="#999" /><path d="M4 7l4-5 4 5z" fill="#bbb" /><circle cx="9" cy="9" r="2" fill="#ccc" /></S></span>
            <span className="ml-[4px] flex"><DnW /></span>
            <span className="ml-[7px]"><S s={13}><path d="M1 2h10v12H1z" fill="#6faa6f" /><path d="M8 6l6 5-3 0 2 4-2 1-2-4-2 2z" fill="#eee" /><path d="M1 2h10v3H1z" fill="#e0e0e0" /></S></span>
            <span className="ml-[4px] flex"><DnW /></span>
            <span className="ml-[6px]"><S s={11}><circle cx="3" cy="3" r="2" fill="#aaa" /><circle cx="13" cy="13" r="2.500" fill="#777" /></S></span>
            <span className="ml-[9px]"><S s={11}><circle cx="8" cy="8" r="7" fill="#ccc" /><circle cx="8" cy="8" r="4" fill="#888" /><circle cx="8" cy="8" r="1.500" fill="#ddd" /></S></span>
          </div>
          <div className="absolute left-[262px] top-[3px] w-[80px] h-[16px] bg-[#8c8c8c] flex items-center justify-between pl-[6px] pr-[3px] text-[#5a5a5a] text-[9.200px]">
            <span>Aluminum</span><span className="flex"><Dn /></span>
          </div>
          <div className="absolute left-[345px] top-[4px] w-[13px] h-[13px] rounded-full bg-[conic-gradient(#e53935,#fdd835,#43a047,#1e88e5,#8e24aa,#e53935)]" />
          <div className="absolute left-[362px] top-[3px] w-[79px] h-[16px] bg-[#8c8c8c] flex items-center justify-between pl-[3px] pr-[3px] text-[#5a5a5a] text-[9.200px]">
            <span className="flex items-center gap-[2px]"><span className="w-[12px] h-[12px] rounded-full bg-[radial-gradient(circle_at_35%_30%,#eee,#777)]" />*Default</span><span className="flex"><Dn /></span>
          </div>
          <div className="absolute left-[444px] top-[5px] flex items-center gap-[9px] text-[#aaa]">
            <span className="w-[12px] h-[12px] rounded-full bg-[conic-gradient(#e53935,#fdd835,#1e88e5,#e53935)]" />
            <span className="w-[12px] h-[12px] rounded-full bg-[conic-gradient(#e53935,#c0c0c0,#8e24aa,#e53935)]" />
            <span className="font-['Liberation_Serif',serif] italic text-[11px] leading-[12px] text-[#bbb]">fx</span>
            <span className="text-[#777] text-[11px] leading-[12px]">┼</span>
            <span className="flex flex-col items-center gap-[1px]"><span className="w-[6px] border-t border-[#ccc]" /><DnW /></span>
          </div>
          <div className="absolute left-[595px] top-[5px] text-[8.900px] text-[#c8c8c8] whitespace-nowrap">Autodesk Inventor Professional 2018&nbsp;&nbsp;&nbsp;Part3</div>
          <span className="absolute left-[847px] top-[9px] w-0 h-0 border-y-[3px] border-y-transparent border-l-[4px] border-l-[#ccc]" />
          <div className="absolute left-[853px] top-[3px] w-[145px] h-[15px] bg-[#7d7d7d] flex items-center pl-[4px] text-[#b4b4b4] text-[8.900px]">Search Help &amp; Commands...</div>
          <div className="absolute left-[1003px] top-[4px] flex items-center">
            <S s={13}><path d="M3 2l9 5-6 1 5 6H2l3-5z" fill="#eee" /></S>
            <Star size={12} fill="#eee" className="ml-[6px] text-[#eee]" />
            <User size={13} fill="#eee" className="ml-[7px] text-[#eee]" />
            <span className="ml-[3px] text-[8.800px] text-[#c8c8c8]">Sign In</span>
          </div>
          <span className="absolute left-[1131px] top-[10px] flex"><DnW /></span>
          <ShoppingCart size={13} fill="#eee" className="absolute left-[1137px] top-[5px] text-[#eee]" />
          <span className="absolute left-[1156px] top-[4px] h-[15px] border-l border-[#777]" />
          <div className="absolute left-[1164px] top-[5px] flex items-center gap-[5px]">
            <span className="w-[13px] h-[13px] rounded-full bg-[#d9e6f5] flex items-center justify-center text-[#2a5fa8] text-[10px] leading-none font-bold">?</span><DnW />
          </div>
          <Minus size={11} className="absolute left-[1207px] top-[8px] text-[#ddd]" />
          <Square size={11} strokeWidth={1.500} className="absolute left-[1227px] top-[6px] text-[#ddd]" />
          <X size={13} className="absolute left-[1245px] top-[5px] text-[#ddd]" />
        </div>

        {/* tab row */}
        <div className="h-[16px] flex items-stretch shrink-0 text-[#c8c8c8] text-[9.100px] leading-[16px]">
          <div className="w-[35px] bg-[#e97a25] text-white text-center">File</div>
          <div className="ml-[2px] w-[56px] bg-[#f5f5f5] text-[#444] text-center">3D Model</div>
          {tabs.map(([t, w]) => <div key={t} className={`${w} text-center whitespace-nowrap`}>{t}</div>)}
          <div className="ml-[15px] flex items-center gap-[3px]">
            <span className="w-[9px] h-[5px] bg-[#ddd] rounded-[1px]" /><DnW />
          </div>
        </div>

        {/* ribbon */}
        <div className="h-[75px] bg-[#f5f5f5] flex shrink-0 leading-[12px]">
          <Group label="Sketch" className="w-[62px]">
            <Big i="sketch" l={["Start", "2D Sketch"]} className="w-full" corner />
          </Group>
          <Group label="Create" className="w-[242px]">
            <Big i="extrude" l={["Extrude"]} className="ml-[2px] w-[36px]" />
            <Big i="revolve" l={["Revolve"]} className="w-[36px]" />
            <Col className="ml-[6px] w-[52px]" items={[["sweep", "Sweep"], ["loft", "Loft"], ["coil", "Coil"]]} />
            <Col className="w-[57px]" items={[["emboss", "Emboss"], ["derive", "Derive"], ["rib", "Rib"]]} />
            <Col className="" items={[["decal", "Decal"], ["imp", "Import"]]} />
          </Group>
          <Group label="Modify" dn className="w-[289px]">
            <Big i="hole" l={["Hole"]} className="ml-[2px] w-[30px]" />
            <Big i="fillet" l={["Fillet"]} className="w-[30px]" />
            <Col className="ml-[4px] w-[62px]" items={[["chamfer", "Chamfer"], ["shell", "Shell"], ["draft", "Draft"]]} />
            <Col className="w-[90px]" items={[["thread", "Thread"], ["combine", "Combine"], ["thicken", "Thicken/ Offset"]]} />
            <Col className="" items={[["split", "Split"], ["direct", "Direct"], ["delface", "Delete Face"]]} />
          </Group>
          <Group label="Explore" className="w-[50px]">
            <Big i="shape" l={["Shape", "Generator"]} className="w-full" />
          </Group>
          <Group label="Work Features" className="w-[103px]">
            <Big i="plane" l={["Plane"]} dn className="ml-[3px] w-[40px]" />
            <Col className="ml-[4px]" items={[["axis", "Axis", true], ["point", "Point", true], ["ucs", "UCS"]]} />
          </Group>
          <Group label="Pattern" className="w-[43px]">
            <div className="ml-[3px] mt-px grid grid-cols-2 gap-x-[3px] gap-y-[2px] h-[56px] content-start">
              {ic.pat1}{ic.pat2}{ic.pat3}<span />{ic.pat4}
            </div>
          </Group>
          <Group label="Create Freeform" className="w-[95px]">
            <Big i="box" l={["Box"]} dn className="ml-px w-[36px]" />
            <Col className="ml-[2px]" items={[["face", "Face"], ["convert", "Convert"]]} />
          </Group>
          <Group label="Surface" className="w-[220px]">
            <Col className="ml-[6px] w-[51px]" items={[["stitch", "Stitch"], ["patch", "Patch"], ["sculpt", "Sculpt"]]} />
            <Col className="w-[82px]" items={[["ruled", "Ruled Surface"], ["trim", "Trim"], ["extend", "Extend"]]} />
            <Col className="" items={[["replace", "Replace Face"], ["repair", "Repair Bodies"], ["fitmesh", "Fit Mesh Face"]]} />
          </Group>
          <Group label="Simulation" className="w-[54px]">
            <Big i="stress" l={["Stress", "Analysis"]} className="w-full" />
          </Group>
          <Group label="Convert" className="w-[59px]">
            <Big i="sheet" l={["Convert to", "Sheet Metal"]} className="w-full" />
          </Group>
          <div className="ml-[3px] mt-[3px] w-[28px] h-[17px] border border-[#dcdcdc] flex items-center justify-center gap-[3px]">
            <span className="w-[11px] h-[11px] rounded-full border border-[#333] flex items-center justify-center"><Dn /></span><Dn />
          </div>
        </div>

        {/* main */}
        <div className="h-[544px] flex shrink-0">
          {/* model browser */}
          <div className="w-[184px] bg-white flex flex-col shrink-0">
            <div className="h-[19px] bg-[#535353] flex items-center text-[#e0e0e0]">
              <div className="w-[57px] h-full bg-[#f5f5f5] flex items-center justify-between pl-[5px] pr-[9px] text-[8.600px] text-[#666]"><span>Model</span><X size={10} strokeWidth={1.300} className="text-[#555]" /></div>
              <Plus size={10} strokeWidth={3} className="ml-[3px]" />
              <Search size={12} strokeWidth={1.500} className="ml-[82px] text-[#ddd]" />
              <Menu size={12} className="ml-[6px] text-[#ddd]" />
            </div>
            <div className="relative pt-[2px] text-[8.400px]">
              <span className="absolute left-[7px] top-[12px] h-[256px] border-l border-dotted border-[#888]" />
              <span className="absolute left-[20px] top-[66px] h-[106px] border-l border-dotted border-[#888]" />
              {rows.map((r, i) => <TreeRow key={i} r={r} idx={i} />)}
            </div>
          </div>
          <div className="w-[2px] shrink-0" />
          {/* viewport */}
          <div className="relative w-[890px] shrink-0 overflow-hidden bg-gradient-to-b from-[#a6a6a6] to-[#d2d2d2]">
            <Scene />
            <Dialog />
            <NavBar />
            <div className="absolute right-[3px] top-[3px] flex items-center gap-[5px] text-[#444]">
              <Minus size={11} /><Copy size={10} strokeWidth={1.500} /><X size={11} strokeWidth={3} />
            </div>
          </div>
          <div className="w-[3px] shrink-0" />
          {/* iLogic */}
          <div className="w-[182px] bg-white flex flex-col shrink-0">
            <div className="h-[19px] bg-[#535353] flex items-center text-[#e0e0e0]">
              <div className="w-[53px] h-full bg-[#f5f5f5] flex items-center justify-between pl-[4px] pr-[9px] text-[8.400px] text-[#666]"><span>iLogic</span><X size={10} strokeWidth={1.300} className="text-[#555]" /></div>
              <Plus size={10} strokeWidth={3} className="ml-[4px]" />
              <Menu size={12} className="ml-[106px] text-[#ddd]" />
            </div>
            <div className="h-[19px] flex items-end pl-[5px] text-[8.100px] text-[#333] relative">
              <div className="w-[31px] h-[18px] bg-white border border-b-0 border-[#d0d0d0] text-center leading-[15px]">Rules</div>
              <div className="w-[32px] h-[16px] bg-[#f0f0f0] border-y border-r border-[#d8d8d8] text-center leading-[15px]">Forms</div>
              <div className="w-[59px] h-[16px] bg-[#f0f0f0] border-y border-r border-[#d8d8d8] text-center leading-[15px]">Global Forms</div>
              <div className="w-[28px] h-[16px] bg-[#f0f0f0] border-y border-[#d8d8d8] pl-[3px] leading-[15px]">Exten</div>
              <div className="absolute right-[2px] top-[3px] flex gap-px">
                <span className="w-[12px] h-[12px] bg-[#f0f0f0] border border-[#aaa] flex items-center justify-center"><span className="w-0 h-0 border-y-[2.500px] border-y-transparent border-r-[3px] border-r-[#222]" /></span>
                <span className="w-[12px] h-[12px] bg-[#f0f0f0] border border-[#aaa] flex items-center justify-center"><span className="w-0 h-0 border-y-[2.500px] border-y-transparent border-l-[3px] border-l-[#222]" /></span>
              </div>
            </div>
            <div className="flex-1 ml-[5px] mr-[4px] border-x border-[#d8d8d8] pt-[2px] text-[8.300px] text-[#333]">
              <div className="h-[15px] flex items-center gap-[2px] ml-[2px]"><Cube s={13} /><span>Part3</span></div>
              <div className="h-[15px] flex items-center gap-[3px] ml-[17px]">
                <S s={13}><path d="M2 2h12l-1 10H1z" fill="#b8cde4" stroke="#2d5a8a" /><path d="M5 12V4h4a2 2 0 0 1 0 4l3 4" fill="none" stroke="#1c3f6c" strokeWidth="1.500" /></S>
                <span>Inicio</span>
              </div>
            </div>
          </div>
        </div>

        {/* status */}
        <div className="mt-px h-[19px] bg-[#f5f5f5] flex items-center relative shrink-0 text-[8.800px] text-[#444]">
          <span className="ml-px">Ready</span>
          <span className="absolute left-[1183px] top-[1px] h-[17px] border-l border-[#ddd]" />
          <span className="absolute left-[1191px] top-[3px]">1</span>
          <span className="absolute left-[1215px] top-[1px] h-[17px] border-l border-[#ddd]" />
          <span className="absolute left-[1222px] top-[3px]">1</span>
          <span className="absolute left-[1246px] top-[1px] h-[17px] border-l border-[#ddd]" />
          <span className="absolute right-[1px] bottom-[2px] w-[7px] h-[7px] bg-[radial-gradient(circle,#999_1px,transparent_1px)] bg-[length:3px_3px]" />
        </div>
      </div>

      {/* taskbar */}
      <div className="mt-[4px] h-[32px] bg-[#0a0f18] flex items-center shrink-0 relative">
        <div className="w-[41px] flex justify-center pr-[3px]">
          <svg width="14" height="14" viewBox="0 0 16 16" className="block"><path d="M0 2.200l6.500-.9v6.300H0zM7.300 1.200L16 0v7.600H7.300zM0 8.400h6.500v6.300L0 13.800zM7.300 8.400H16V16l-8.700-1.200z" fill="#fff" /></svg>
        </div>
        <Task line={false}>
          <svg width="22" height="22" viewBox="0 0 22 22" className="block">
            <text x="11" y="17" textAnchor="middle" fontSize="20" fontWeight="700" fill="#39a6e9" fontFamily="'Liberation Sans',sans-serif">e</text>
            <path d="M3 19C1 15 9 6 19 3" fill="none" stroke="#e8c33a" strokeWidth="1" />
          </svg>
        </Task>
        <Task>
          <svg width="20" height="20" viewBox="0 0 20 20" className="block"><path d="M0 3l11-3v20L0 17z" fill="#0f6cbf" /><circle cx="5.500" cy="10" r="2.800" fill="none" stroke="#fff" strokeWidth="1.600" /><path d="M11 6h8v8h-8z" fill="#eaf3fb" /><path d="M11 6l4 4 4-4" fill="none" stroke="#0f6cbf" /></svg>
        </Task>
        <Task>
          <svg width="19" height="19" viewBox="0 0 20 20" className="block"><rect width="20" height="20" rx="2" fill="#f0f0f0" /><path d="M4 16V10l3-1v7z" fill="#6a9c5a" /><circle cx="6" cy="6" r="2" fill="#6a9c5a" /><path d="M9 14l7-9 2 2-7 9z" fill="#555" /></svg>
        </Task>
        <Task>
          <svg width="19" height="19" viewBox="0 0 20 20" className="block">
            <circle cx="10" cy="10" r="9.500" fill="#dd4b3e" />
            <path d="M10 10L1.800 14.800A9.500 9.500 0 0 0 10 19.500l4.800-8z" fill="#2fa84f" />
            <path d="M18.200 5.200A9.500 9.500 0 0 1 10 19.500L14.800 11 10 5.500z" fill="#fbc02d" />
            <circle cx="10" cy="10" r="4.600" fill="#fff" /><circle cx="10" cy="10" r="3.500" fill="#3b82e4" />
          </svg>
        </Task>
        <Task><Ilogo /></Task>
        <Task>
          <svg width="19" height="17" viewBox="0 0 20 18" className="block"><path d="M1 2h7l2 2h9v13H1z" fill="#f8d775" /><path d="M1 6h18v11H1z" fill="#fbe59c" /><path d="M6 11h8v4H6z" fill="#3a9ad9" /></svg>
        </Task>
        <Task active><Ilogo /></Task>
        <Task>
          <svg width="19" height="19" viewBox="0 0 20 20" className="block"><path d="M1 6l8-5 9 6-7 11z" fill="#6a7a5a" stroke="#ccc" /><path d="M8 6l5 4-5 4z" fill="#bfe0b0" /><circle cx="14.500" cy="14.500" r="4" fill="#e63030" /><path d="M12.500 14.500h4" stroke="#fff" /></svg>
        </Task>
        {/* tray */}
        <div className="absolute left-[1069px] top-0 h-[32px] flex items-center">
          <svg width="14" height="14" viewBox="0 0 16 16" className="block"><path d="M1 5h12l2 6H1z" fill="#9a9a9a" /><path d="M4 10l3 3 6-7" stroke="#5fc05f" strokeWidth="2" fill="none" /></svg>
          <svg width="10" height="14" viewBox="0 0 10 14" className="block ml-[5px]"><path d="M9 0v14L3 9H0V5h3z" fill="#d8603c" /></svg>
          <svg width="12" height="13" viewBox="0 0 12 13" className="block ml-[9px]"><path d="M0 0h12v13H0z" fill="#2d4a2d" /><path d="M1 6c3-5 8-4 10 0-3 4-7 4-10 0z" fill="#76b900" /></svg>
          <svg width="13" height="14" viewBox="0 0 14 16" className="block ml-[8px]"><path d="M7 0l6 2v6c0 4-3 6-6 8-3-2-6-4-6-8V2z" fill="#f0f0f0" /><circle cx="10" cy="11" r="4" fill="#2aa05a" /></svg>
          <svg width="14" height="13" viewBox="0 0 16 14" className="block ml-[6px]" fill="none" stroke="#eee"><path d="M1 1h11v8H1zM4 12h6M7 9v3M12 4h3v5" /></svg>
          <svg width="14" height="13" viewBox="0 0 16 14" className="block ml-[5px]" fill="none" stroke="#ccc"><path d="M1 5h3l4-3v10L4 9H1zM10 4a4 4 0 0 1 0 6M12 2a7 7 0 0 1 0 10" /></svg>
          <div className="ml-[8px] w-[50px] text-center text-[#d4d4d4] text-[9px] leading-[15px] whitespace-nowrap font-['Liberation_Sans',sans-serif]">08:47 a. m.<br />02/04/2019</div>
        </div>
        <svg width="14" height="13" viewBox="0 0 16 15" className="absolute left-[1246px] top-[10px] block" fill="none" stroke="#eee"><path d="M1 1h14v10H9l-3 3v-3H1z" /></svg>
      </div>
    </div>
  );
}
